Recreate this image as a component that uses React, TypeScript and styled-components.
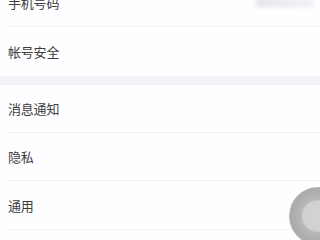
import React from "react";
import styled, { createGlobalStyle } from "styled-components";

const Global = createGlobalStyle`
  html, body { margin: 0; padding: 0; background: #fefdff; overflow: hidden; }
  body { font-family: "Noto Sans CJK SC", "Noto Sans", sans-serif; }
`;

const Page = styled.div`
  width: 320px;
  height: 240px;
  overflow: hidden;
  position: relative;
  background: #fefdff;
`;

const Group = styled.div<{ $offset?: number }>`
  display: flex;
  flex-direction: column;
  background: #fefdff;
  margin-top: ${(p) => p.$offset ?? 0}px;
`;

const Gap = styled.div`
  height: 9px;
  background: #f3f3f7;
`;

const Row = styled.div<{ $h: number; $line?: boolean }>`
  height: ${(p) => p.$h}px;
  display: flex;
  align-items: center;
  justify-content: space-between;
  margin-left: 8px;
  padding-right: 6px;
  box-sizing: border-box;
  border-bottom: ${(p) => (p.$line ? "1px solid #f1f1f4" : "none")};
`;

const Label = styled.span`
  font-size: 13px;
  color: #3d3d3d;
  letter-spacing: -0.2px;
`;

const Value = styled.span`
  width: 58px;
  height: 8px;
  border-radius: 4px;
  background: linear-gradient(90deg, #e2e2e8, #ececf1 60%, #f0f0f4);
  filter: blur(2px);
  align-self: flex-start;
  margin-top: 20px;
`;

const Assist = styled.div`
  position: absolute;
  left: 289px;
  top: 187px;
  width: 58px;
  height: 58px;
  border-radius: 50%;
  background: radial-gradient(circle at 50% 50%, #d3d3d5 0, #d0d0d2 15px, #b7b7ba 17px, #aaaaad 27px, #b5b5b8 29px);
  filter: blur(0.6px);
`;

export default function App() {
  return (
    <Page>
      <Global />
      <Group $offset={-21}>
        <Row $h={48} $line>
          <Label>手机号码</Label>
          <Value />
        </Row>
        <Row $h={49}>
          <Label>帐号安全</Label>
        </Row>
      </Group>
      <Gap />
      <Group>
        <Row $h={48} $line>
          <Label>消息通知</Label>
        </Row>
        <Row $h={48} $line>
          <Label>隐私</Label>
        </Row>
        <Row $h={49} $line>
          <Label>通用</Label>
        </Row>
      </Group>
      <Assist />
    </Page>
  );
}
